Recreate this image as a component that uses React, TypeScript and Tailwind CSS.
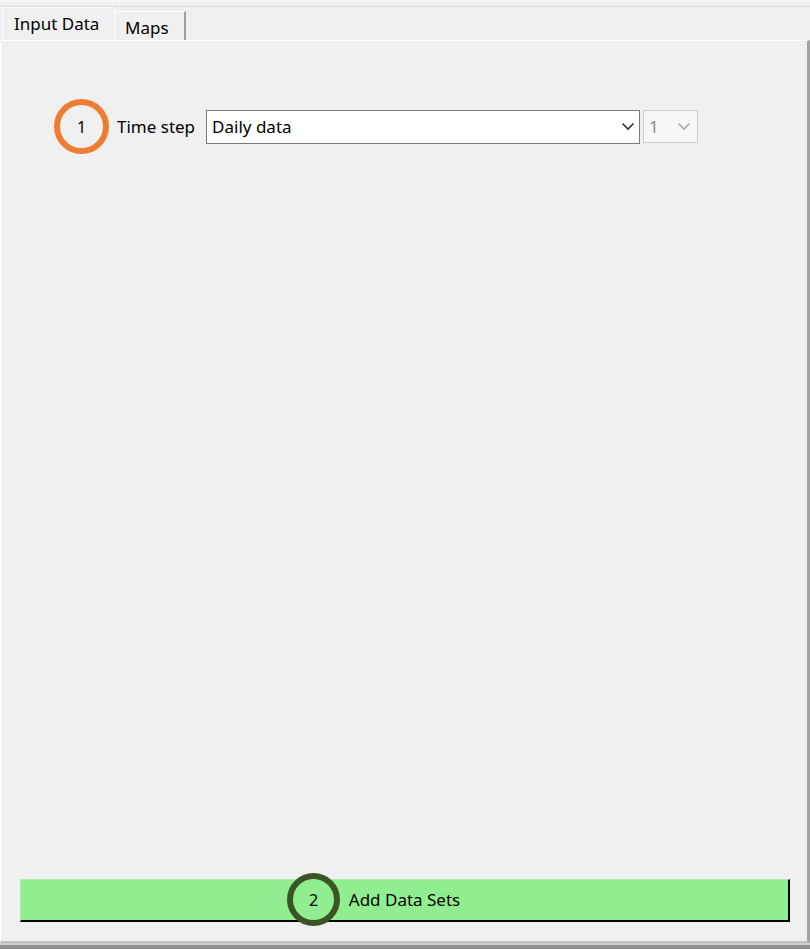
import React from "react";

function Chevron({ color }: { color: string }) {
  return (
    <svg width="14" height="9" viewBox="0 0 14 9" fill="none">
      <path d="M1.5 1.5 L7 7 L12.5 1.5" stroke={color} strokeWidth="1.6" />
    </svg>
  );
}

export default function App() {
  return (
    <div
      className="w-[810px] h-[949px] bg-[#f0f0f0] flex flex-col overflow-hidden text-[#000]"
      style={{ fontFamily: '"Noto Sans", "Open Sans", sans-serif' }}
    >
      <div className="h-[7px] border-t-[2px] border-[#f7f7f7] bg-[#f0f0f0] border-b border-b-[#dedede] mt-0 shrink-0" />
      <div className="flex items-end h-[33px] pl-[2px] shrink-0">
        <div className="h-[33px] w-[112px] bg-[#f0f0f0] border-t border-l border-[#ffffff] flex items-center pl-[11px] pb-[1px] text-[17px] leading-none relative z-10">
          Input Data
        </div>
        <div className="h-[29px] w-[72px] bg-[#f0f0f0] border-t border-l border-[#ffffff] border-r-2 border-r-[#a0a0a0] flex items-center pl-[10px] pt-[3px] text-[17px] leading-none">
          Maps
        </div>
      </div>
      <div className="flex-1 flex flex-col border-t border-white border-l border-l-[#ffffff] border-r-[3px] border-r-[#a3a3a3] border-b-[2px] border-b-[#c2c2c2]">
        <div className="flex items-center pt-[58px] pl-[53px]">
          <div className="w-[55px] h-[55px] rounded-full border-[6px] border-[#ed7d31] flex items-center justify-center text-[16px]">
            1
          </div>
          <span className="ml-[8px] text-[17px]">Time step</span>
          <div className="ml-[11px] w-[434px] h-[34px] bg-white border border-[#7a7a7a] flex items-center justify-between pl-[5px] pr-[4px] text-[17px]">
            <span>Daily data</span>
            <Chevron color="#333333" />
          </div>
          <div className="ml-[3px] w-[55px] h-[33px] bg-[#f7f7f7] border border-[#cccccc] flex items-center justify-between pl-[5px] pr-[6px] text-[17px] text-[#8a8a8a]">
            <span>1</span>
            <Chevron color="#a8a8a8" />
          </div>
        </div>
        <div className="flex-1" />
        <div className="pl-[19px] pr-[17px] pb-[19px]">
          <div className="relative h-[43px] bg-[#90ee90] border-t border-l border-[#a8eea8] border-r-2 border-b-2 border-r-[#000] border-b-[#000] flex items-center justify-center text-[17px]">
            <div className="absolute left-[266px] top-[-7px] w-[53px] h-[53px] rounded-full border-[6px] border-[#3a5423] flex items-center justify-center text-[16px]">
              2
            </div>
            Add Data Sets
          </div>
        </div>
      </div>
      <div className="h-[6px] bg-[#8f8f8f] border-t-[2px] border-t-[#cfcfcf] shrink-0" />
    </div>
  );
}
